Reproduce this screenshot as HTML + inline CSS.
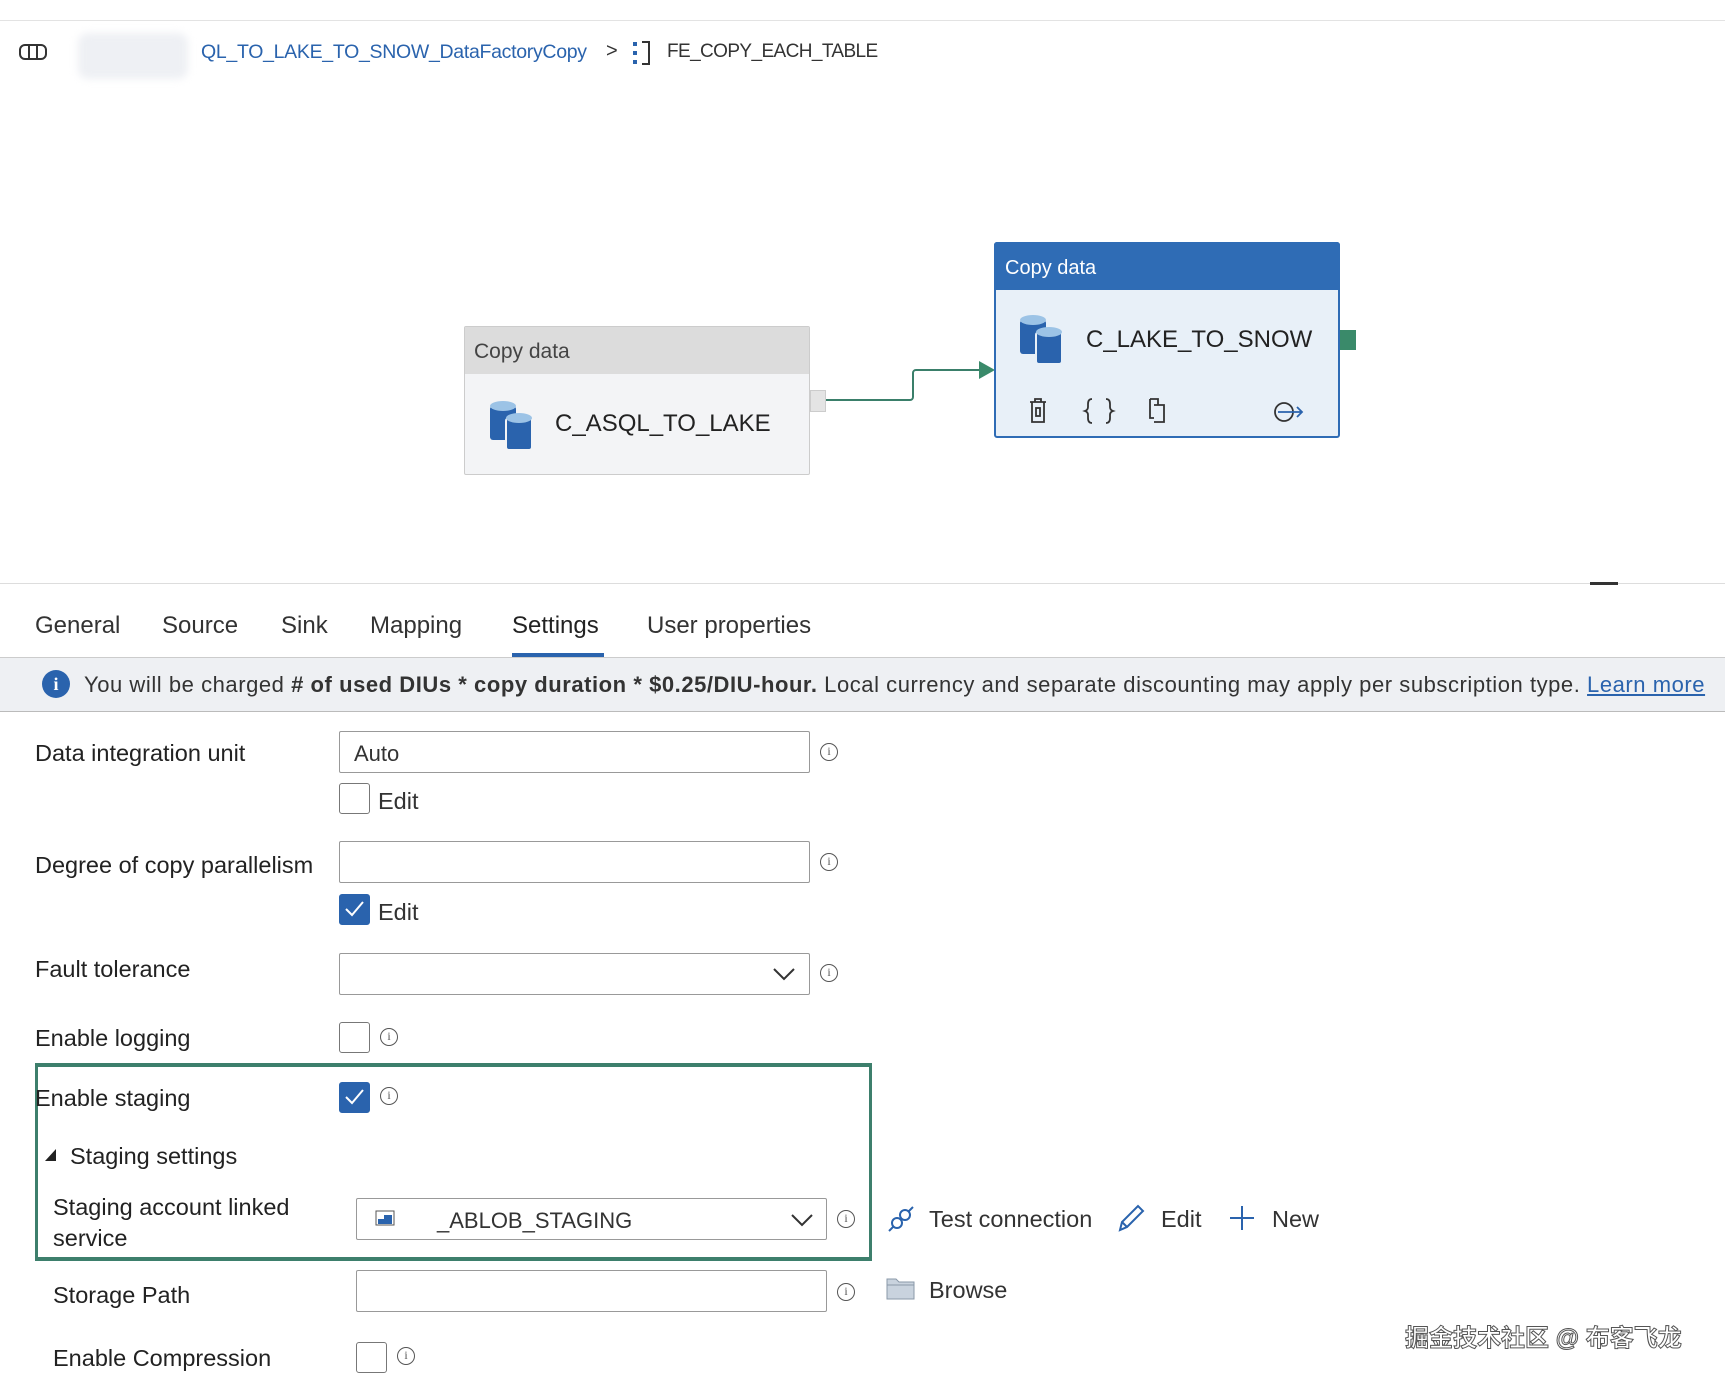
<!DOCTYPE html>
<html><head><meta charset="utf-8"><style>
*{margin:0;padding:0;box-sizing:border-box}
body{width:1725px;height:1381px;background:#fff;position:relative;overflow:hidden;font-family:"Liberation Sans","Noto Sans CJK SC",sans-serif;color:#222}
.a{position:absolute;white-space:nowrap}
.lbl{font-size:23.5px;color:#222}
.inp{position:absolute;border:1px solid #999;border-radius:2px;background:#fff}
.cb{position:absolute;width:31px;height:31px;border:1.5px solid #777;border-radius:3px;background:#fff}
.cb.on{background:#2a63ad;border-color:#2a63ad}
.info{position:absolute;width:18px;height:18px;border:1.5px solid #555;border-radius:50%;font-size:12px;text-align:center;line-height:15px;color:#555;font-family:"Liberation Serif",serif}
</style></head><body>
<div class="a" style="left:0;top:20px;width:1725px;height:1px;background:#e3e3e3"></div>
<svg class="a" style="left:18px;top:42px" width="30" height="20" viewBox="0 0 30 20"><rect x="2" y="3" width="26" height="14" rx="5" fill="none" stroke="#333" stroke-width="2"/><line x1="11" y1="3" x2="11" y2="17" stroke="#333" stroke-width="2"/><line x1="19" y1="3" x2="19" y2="17" stroke="#333" stroke-width="2"/></svg>
<div class="a" style="left:78px;top:33px;width:110px;height:46px;background:#eef0f4;border-radius:10px;filter:blur(4px)"></div>
<div class="a" style="left:201px;top:41px;font-size:19.5px;color:#2a63ad;letter-spacing:-0.3px">QL_TO_LAKE_TO_SNOW_DataFactoryCopy</div>
<div class="a" style="left:606px;top:40px;font-size:20px;color:#333">&gt;</div>
<svg class="a" style="left:632px;top:40px" width="20" height="26"><rect x="1" y="2" width="4" height="4" fill="#2a63ad"/><rect x="1" y="11" width="4" height="4" fill="#2a63ad"/><rect x="1" y="20" width="4" height="4" fill="#2a63ad"/><path d="M10 2h7v22h-7" fill="none" stroke="#333" stroke-width="2"/></svg>
<div class="a" style="left:667px;top:41px;font-size:19px;color:#333;letter-spacing:-0.6px">FE_COPY_EACH_TABLE</div>
<div class="a" style="left:464px;top:326px;width:346px;height:149px;border:1px solid #ccc;background:#f3f4f6;border-radius:2px"></div>
<div class="a" style="left:465px;top:327px;width:344px;height:47px;background:#dcdcdc"></div>
<div class="a" style="left:474px;top:340px;font-size:21px;color:#444">Copy data</div>
<svg class="a" style="left:488px;top:400px" width="48" height="52"><g fill="#2a63ad"><rect x="2" y="6" width="26" height="34" rx="3"/><ellipse cx="15" cy="6" rx="13" ry="5" fill="#9cc3e6"/><rect x="18" y="18" width="26" height="32" rx="3" stroke="#f3f4f6" stroke-width="2"/><ellipse cx="31" cy="18" rx="13" ry="5" fill="#9cc3e6"/></g></svg>
<div class="a" style="left:555px;top:410px;font-size:24px;color:#222">C_ASQL_TO_LAKE</div>
<div class="a" style="left:810px;top:390px;width:16px;height:22px;background:#e4e4e4;border:1px solid #ccc"></div>
<svg class="a" style="left:824px;top:330px" width="175" height="80"><path d="M2 70H86a3 3 0 0 0 3-3V43a3 3 0 0 1 3-3H155" fill="none" stroke="#3a7f6a" stroke-width="2"/><path d="M155 31l16 9-16 9z" fill="#3a8a6a"/></svg>
<div class="a" style="left:994px;top:242px;width:346px;height:196px;border:2px solid #2f6cb5;background:#e8f0f8;border-radius:3px"></div>
<div class="a" style="left:994px;top:242px;width:346px;height:48px;background:#2f6cb5;border-radius:3px 3px 0 0"></div>
<div class="a" style="left:1005px;top:257px;font-size:20px;color:#fff">Copy data</div>
<svg class="a" style="left:1018px;top:314px" width="48" height="52"><g fill="#2a63ad"><rect x="2" y="6" width="26" height="34" rx="3"/><ellipse cx="15" cy="6" rx="13" ry="5" fill="#9cc3e6"/><rect x="18" y="18" width="26" height="32" rx="3" stroke="#e8f0f8" stroke-width="2"/><ellipse cx="31" cy="18" rx="13" ry="5" fill="#9cc3e6"/></g></svg>
<div class="a" style="left:1086px;top:326px;font-size:24px;color:#222">C_LAKE_TO_SNOW</div>
<div class="a" style="left:1340px;top:330px;width:16px;height:20px;background:#3a8a6a"></div>
<svg class="a" style="left:1026px;top:396px" width="280" height="30"><g fill="none" stroke="#333" stroke-width="1.8"><path d="M4 6h16M9 6V3h6v3M6 6v20h12V6"/><rect x="10" y="12" width="4" height="8"/><path d="M66 3q-4 0-4 5v3q0 3-3 4 3 1 3 4v3q0 5 4 5M80 3q4 0 4 5v3q0 3 3 4-3 1-3 4v3q0 5-4 5"/><path d="M124 3h8l0 6h6v17h-10M124 3v19h4M128 9h10"/><circle cx="258" cy="16" r="9"/><path d="M252 16h24M271 11l5 5-5 5" stroke="#2a63ad"/></g></svg>
<div class="a" style="left:0;top:583px;width:1725px;height:1px;background:#ddd"></div>
<div class="a" style="left:1590px;top:582px;width:28px;height:3px;background:#333"></div>
<div class="a" style="left:35px;top:612px;font-size:24px;color:#333">General</div>
<div class="a" style="left:162px;top:612px;font-size:24px;color:#333">Source</div>
<div class="a" style="left:281px;top:612px;font-size:24px;color:#333">Sink</div>
<div class="a" style="left:370px;top:612px;font-size:24px;color:#333">Mapping</div>
<div class="a" style="left:512px;top:612px;font-size:24px;color:#222">Settings</div>
<div class="a" style="left:647px;top:612px;font-size:24px;color:#333">User properties</div>
<div class="a" style="left:512px;top:653px;width:92px;height:4px;background:#2a63ad"></div>
<div class="a" style="left:0;top:657px;width:1725px;height:55px;background:#eef0f3;border-top:1px solid #ccc;border-bottom:1px solid #bbb"></div>
<div class="a" style="left:42px;top:670px;width:28px;height:28px;border-radius:50%;background:#2a63ad;color:#fff;font-weight:bold;font-size:18px;text-align:center;line-height:28px;font-family:'Liberation Serif',serif">i</div>
<div class="a" style="left:84px;top:672px;font-size:22px;color:#333;letter-spacing:0.55px">You will be charged <b># of used DIUs * copy duration * $0.25/DIU-hour.</b> Local currency and separate discounting may apply per subscription type. <span style="color:#2a63ad;text-decoration:underline">Learn more</span></div>
<div class="a lbl" style="left:35px;top:740px">Data integration unit</div>
<div class="inp" style="left:339px;top:731px;width:471px;height:42px"></div>
<div class="a" style="left:354px;top:741px;font-size:22px;color:#333">Auto</div>
<div class="info" style="left:820px;top:743px">i</div>
<div class="cb" style="left:339px;top:783px"></div>
<div class="a lbl" style="left:378px;top:788px;color:#333">Edit</div>
<div class="a lbl" style="left:35px;top:852px">Degree of copy parallelism</div>
<div class="inp" style="left:339px;top:841px;width:471px;height:42px"></div>
<div class="info" style="left:820px;top:853px">i</div>
<div class="cb on" style="left:339px;top:894px"><svg width="28" height="28"><path d="M6 14l6 6 11-13" fill="none" stroke="#fff" stroke-width="2"/></svg></div>
<div class="a lbl" style="left:378px;top:899px;color:#333">Edit</div>
<div class="a lbl" style="left:35px;top:956px">Fault tolerance</div>
<div class="inp" style="left:339px;top:953px;width:471px;height:42px"></div>
<svg class="a" style="left:772px;top:966px" width="24" height="16"><path d="M2 3l10 10 10-10" fill="none" stroke="#333" stroke-width="2"/></svg>
<div class="info" style="left:820px;top:964px">i</div>
<div class="a lbl" style="left:35px;top:1025px">Enable logging</div>
<div class="cb" style="left:339px;top:1022px"></div>
<div class="info" style="left:380px;top:1028px">i</div>
<div class="a" style="left:35px;top:1063px;width:837px;height:198px;border:3px solid #3d7f6c;border-top-width:4px;border-bottom-width:4px"></div>
<div class="a lbl" style="left:35px;top:1085px">Enable staging</div>
<div class="cb on" style="left:339px;top:1082px"><svg width="28" height="28"><path d="M6 14l6 6 11-13" fill="none" stroke="#fff" stroke-width="2"/></svg></div>
<div class="info" style="left:380px;top:1087px">i</div>
<svg class="a" style="left:44px;top:1148px" width="14" height="14"><path d="M12 1v12H1z" fill="#222"/></svg>
<div class="a lbl" style="left:70px;top:1143px">Staging settings</div>
<div class="a lbl" style="left:53px;top:1192px;line-height:31px">Staging account linked<br>service</div>
<div class="inp" style="left:356px;top:1198px;width:471px;height:42px"></div>
<svg class="a" style="left:375px;top:1210px" width="20" height="16"><rect x="1" y="1" width="18" height="14" fill="#fff" stroke="#555"/><rect x="3" y="5" width="14" height="9" fill="#2a63ad"/><rect x="3" y="5" width="6" height="4" fill="#fff"/></svg>
<div class="a" style="left:437px;top:1208px;font-size:22px;color:#333">_ABLOB_STAGING</div>
<svg class="a" style="left:790px;top:1212px" width="24" height="16"><path d="M2 3l10 10 10-10" fill="none" stroke="#333" stroke-width="2"/></svg>
<div class="info" style="left:837px;top:1210px">i</div>
<svg class="a" style="left:886px;top:1204px" width="30" height="30"><g fill="none" stroke="#2a63ad" stroke-width="2"><circle cx="11" cy="19" r="5"/><circle cx="19" cy="11" r="5"/><path d="M3 27l5-5M22 8l5-5"/></g></svg>
<div class="a lbl" style="left:929px;top:1206px;color:#333">Test connection</div>
<svg class="a" style="left:1116px;top:1202px" width="30" height="32"><path d="M4 28l2-8L22 4l5 5-16 16z M6 20l5 5" fill="none" stroke="#2a63ad" stroke-width="2"/></svg>
<div class="a lbl" style="left:1161px;top:1206px;color:#333">Edit</div>
<svg class="a" style="left:1228px;top:1204px" width="28" height="28"><path d="M14 2v24M2 14h24" stroke="#2a63ad" stroke-width="2"/></svg>
<div class="a lbl" style="left:1272px;top:1206px;color:#333">New</div>
<div class="a lbl" style="left:53px;top:1282px">Storage Path</div>
<div class="inp" style="left:356px;top:1270px;width:471px;height:42px"></div>
<div class="info" style="left:837px;top:1283px">i</div>
<svg class="a" style="left:886px;top:1276px" width="30" height="24"><path d="M1 3h9l3 3h15v17H1z" fill="#c9d3de" stroke="#8a98a8"/><path d="M1 9h27" stroke="#8a98a8"/></svg>
<div class="a lbl" style="left:929px;top:1277px;color:#333">Browse</div>
<div class="a lbl" style="left:53px;top:1345px">Enable Compression</div>
<div class="cb" style="left:356px;top:1342px"></div>
<div class="info" style="left:397px;top:1347px">i</div>
<div class="a" style="left:1405px;top:1318px;font-size:24px;color:#fff;-webkit-text-stroke:1px #555;font-weight:bold">掘金技术社区 @ 布客飞龙</div>
</body></html>
